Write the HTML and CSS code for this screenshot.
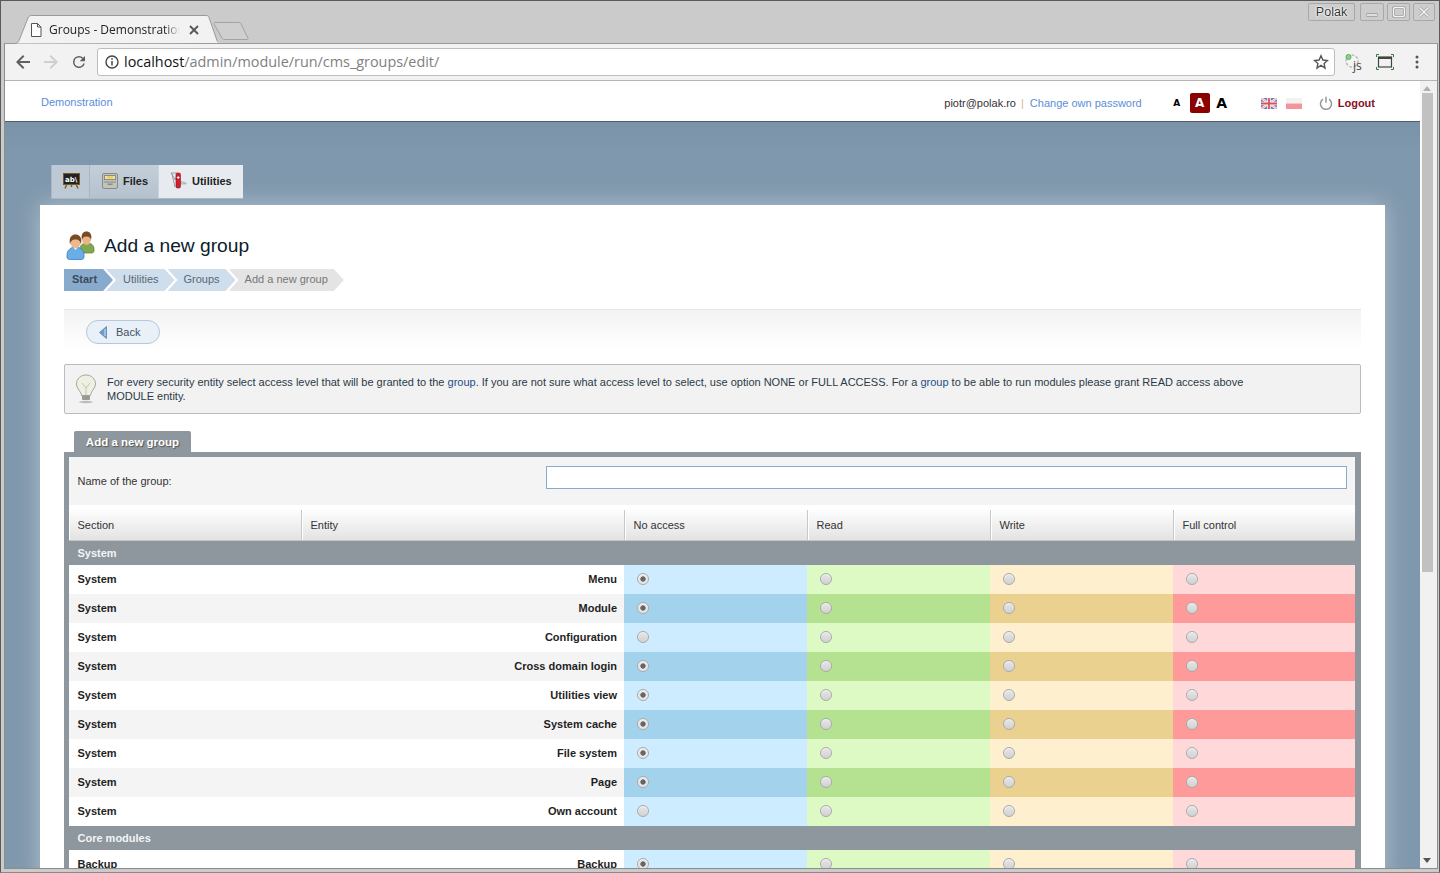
FILE: index.html
```html
<!DOCTYPE html>
<html lang="en">
<head>
<meta charset="utf-8">
<title>Groups - Demonstration</title>
<link rel="stylesheet" href="styles.css">
</head>
<body>
<div class="window">
  <div class="tabstrip">
    <div class="tab">
      <svg class="tab-shape" width="206" height="29" viewBox="0 0 206 29"><path d="M0 28.5h3c2 0 3-1 4-3L16 3c1-2 2-2.500 4-2.500h174c1.500 0 2.500.5 3 2l8 23c.6 1.800 1.500 2.500 3 2.500" fill="#f2f2f2" stroke="#9a9a9a"/></svg>
      <svg class="tab-doc" width="12" height="14" viewBox="0 0 12 14"><path d="M1.500.5h6l3.500 3.500v9.500h-9.500zM7.500.5v3.500h3.500" fill="#fff" stroke="#555"/></svg>
      <span class="tab-title">Groups - Demonstration</span>
      <svg class="tab-close" width="10" height="10" viewBox="0 0 10 10"><path d="M1 1l8 8M9 1l-8 8" stroke="#555" stroke-width="1.800"/></svg>
    </div>
    <svg class="newtab" width="36" height="18" viewBox="0 0 36 18"><path d="M2 .5h24c1 0 1.500.3 2 1.500l7 14c.3 1 0 1.500-1 1.500H11c-1 0-1.500-.5-2-1.500L1 2C.7 1 1 .5 2 .5z" fill="#cfcfcf" stroke="#a2a2a2"/></svg>
    <div class="spacer"></div>
    <div class="winbtn winbtn-user">Polak</div>
    <div class="winbtn winbtn-min"><svg width="14" height="12" viewBox="0 0 14 12"><path d="M1.500 9h11" stroke="#9a9a9a" stroke-width="3.500"/><path d="M2 9h10" stroke="#f4f4f4" stroke-width="1.500"/></svg></div>
    <div class="winbtn winbtn-max"><svg width="14" height="12" viewBox="0 0 14 12"><rect x="1.500" y="1.500" width="11" height="9" rx="1.500" fill="none" stroke="#9a9a9a" stroke-width="3"/><rect x="1.500" y="1.500" width="11" height="9" rx="1.500" fill="none" stroke="#f4f4f4" stroke-width="1.400"/></svg></div>
    <div class="winbtn winbtn-close"><svg width="14" height="12" viewBox="0 0 14 12"><path d="M2.500 1.500l9 9M11.500 1.500l-9 9" stroke="#9a9a9a" stroke-width="3"/><path d="M2.500 1.500l9 9M11.500 1.500l-9 9" stroke="#f4f4f4" stroke-width="1.600"/></svg></div>
  </div>
  <div class="frame">
    <div class="toolbar">
      <svg class="nav-ico" width="16" height="16" viewBox="0 0 16 16"><path d="M15 7H4.800l4.600-4.600L8 1 1 8l7 7 1.400-1.400L4.800 9H15z" fill="#5f5f5f"/></svg>
      <svg class="nav-ico" width="16" height="16" viewBox="0 0 16 16"><path d="M1 7h10.200L6.600 2.400 8 1l7 7-7 7-1.400-1.400L11.200 9H1z" fill="#cfcfcf"/></svg>
      <svg class="nav-ico" width="18" height="18" viewBox="0 0 24 24"><path d="M17.650 6.350A7.960 7.960 0 0 0 12 4a8 8 0 1 0 7.750 10h-2.080A6 6 0 1 1 12 6c1.660 0 3.140.69 4.220 1.780L13 11h7V4z" fill="#5f5f5f"/></svg>
      <div class="omnibox">
        <svg width="14" height="14" viewBox="0 0 14 14"><circle cx="7" cy="7" r="6" fill="none" stroke="#444" stroke-width="1.400"/><path d="M7 6v4.500M7 3.300v1.500" stroke="#444" stroke-width="1.500"/></svg>
        <span class="url"><span class="url-host">localhost</span>/admin/module/run/cms_groups/edit/</span>
        <svg class="star" width="16" height="16" viewBox="0 0 16 16"><path d="M8 1.800l1.900 4.200 4.600.5-3.400 3.100.9 4.500L8 11.300l-4 2.800.9-4.500L1.500 6.500l4.600-.5z" fill="none" stroke="#555" stroke-width="1.400"/></svg>
      </div>
      <div class="ext ext-js">
        <svg width="18" height="18" viewBox="0 0 18 18"><circle cx="8" cy="8" r="6" fill="#f4f4f4" stroke="#bbb" stroke-width="1.500" stroke-dasharray="3 1.500"/><circle cx="4.500" cy="4" r="2.500" fill="#8fd08f" stroke="#5cae5c"/></svg>
        <span class="js-label">js</span>
      </div>
      <div class="ext">
        <svg width="18" height="16" viewBox="0 0 18 16"><rect x="2.500" y="3" width="13" height="10" fill="none" stroke="#444" stroke-width="1.200"/><path d="M2.500 3h13v2h-13z" fill="#444"/><path d="M.5 3V.5H3M15 .5h2.500V3M17.500 13v2.500H15M3 15.500H.5V13" fill="none" stroke="#2e7d32" stroke-width="1"/></svg>
      </div>
      <div class="ext">
        <svg width="4" height="14" viewBox="0 0 4 14"><circle cx="2" cy="2" r="1.500" fill="#555"/><circle cx="2" cy="7" r="1.500" fill="#555"/><circle cx="2" cy="12" r="1.500" fill="#555"/></svg>
      </div>
    </div>
    <div class="viewport">
      <div class="page">
        <header class="site-head">
          <a class="site-name" href="#">Demonstration</a>
          <div class="site-tools">
            <span class="user">piotr@polak.ro</span>
            <span class="sep">|</span>
            <a class="pass" href="#">Change own password</a>
            <div class="fonts">
              <span class="f f-s">A</span>
              <span class="f f-m">A</span>
              <span class="f f-l">A</span>
            </div>
            <div class="flags">
              <svg width="16" height="11" viewBox="0 0 16 11"><rect width="16" height="11" fill="#6a7fb5"/><path d="M0 0l16 11M16 0L0 11" stroke="#fff" stroke-width="2.200"/><path d="M0 0l16 11M16 0L0 11" stroke="#e88" stroke-width=".8"/><path d="M8 0v11M0 5.500h16" stroke="#fff" stroke-width="3.500"/><path d="M8 0v11M0 5.500h16" stroke="#d9505a" stroke-width="1.800"/></svg>
              <svg width="16" height="11" viewBox="0 0 16 11"><rect width="16" height="5.500" fill="#f2f2f2"/><rect y="5.500" width="16" height="5.500" fill="#f3959c"/></svg>
            </div>
            <svg class="power" width="14" height="14" viewBox="0 0 14 14"><path d="M4 3.200A5.500 5.500 0 1 0 10 3.200M7 .8v6" fill="none" stroke="#999" stroke-width="1.500"/></svg>
            <a class="logout" href="#">Logout</a>
          </div>
        </header>
        <div class="stage">
          <nav class="menu">
            <a class="menu-item m-board" href="#">
              <svg width="17" height="16" viewBox="0 0 17 16"><path d="M4 11l-2 4.500M13 11l2 4.500M8.500 11v3" stroke="#7a5a20" stroke-width="1.400"/><rect x=".5" y=".5" width="16" height="11" fill="#222" stroke="#7a5a20"/><text class="board-text" x="2" y="8.500">ab\</text></svg>
            </a>
            <a class="menu-item m-files" href="#">
              <svg width="16" height="16" viewBox="0 0 16 16"><rect x=".5" y=".5" width="15" height="15" rx="1.500" fill="#c2c2bd" stroke="#8b8b86"/><rect x="2.500" y="2.500" width="11" height="4" fill="#ebe3b5" stroke="#8b8b86"/><rect x="5" y="3.500" width="6" height="1.600" fill="#f0c930"/><path d="M2 9h12" stroke="#8b8b86"/><rect x="5.500" y="10.500" width="5" height="1.500" fill="#8b8b86"/></svg>
              Files
            </a>
            <a class="menu-item m-util" href="#">
              <svg width="17" height="17" viewBox="0 0 17 17"><path d="M1 1h6L5.500 8zM2 2l3 13" fill="none" stroke="#9a9a9a"/><path d="M9 9l7 2v1H9z" fill="#cfcfcf" stroke="#999" stroke-width=".6"/><rect x="6" y="1" width="4.500" height="15" rx="1.500" fill="#cf1f2c" stroke="#8d1019" stroke-width=".6"/><path d="M8.200 4v3M6.800 5.500h2.800" stroke="#fff" stroke-width=".9"/></svg>
              Utilities
            </a>
          </nav>
          <main class="panel">
            <div class="title-row">
              <svg width="29" height="29" viewBox="0 0 29 29">
                <path d="M14 18c0-4 3-6 7-6s7 2 7 6v2c0 1-1 2-2 2H16c-1 0-2-1-2-2z" fill="#7fa84f" stroke="#5c7f35" stroke-width=".7"/>
                <ellipse cx="20.500" cy="8" rx="4.500" ry="6" fill="#e9b48c"/>
                <path d="M16 9C14.500 3 17.500.5 20.500.5S26.500 3 25 9c-.5-2-1.500-3.500-4.500-3.500S16.500 7 16 9z" fill="#7a4a22"/>
                <path d="M1 24c0-5 4-8 8.500-8s8.500 3 8.500 8v2c0 1.500-1 2.500-2.500 2.500h-12C2 28.500 1 27.500 1 26z" fill="#6aaee8" stroke="#3a7fc0" stroke-width=".8"/>
                <path d="M7 16l2.500 3L12 16z" fill="#fff"/>
                <ellipse cx="9.500" cy="11.500" rx="5" ry="6" fill="#ecb88f"/>
                <path d="M4 13.500C2.500 6 6 3.500 9.500 3.500S16.500 6 15 13.500c-.5-3-2-5-5.500-5S4.500 10.500 4 13.500z" fill="#7a4a22"/>
              </svg>
              <h1 class="title">Add a new group</h1>
            </div>
            <ol class="crumbs">
              <li class="crumb crumb-first">Start</li>
              <li class="crumb crumb-u">Utilities</li>
              <li class="crumb crumb-g">Groups</li>
              <li class="crumb crumb-last">Add a new group</li>
            </ol>
            <div class="actions">
              <a class="back" href="#">
                <svg width="8" height="13" viewBox="0 0 8 13"><path d="M7.500 .5v12L.5 6.500z" fill="#6d9cc9" stroke="#4f7ea9" stroke-width=".7"/><path d="M6 3v7" stroke="#cfe0f0" stroke-width="1"/></svg>
                Back
              </a>
            </div>
            <div class="info">
              <svg width="22" height="30" viewBox="0 0 22 30">
                <path d="M11 1C5.500 1 1.500 5 1.500 10c0 4 3 6 4.500 9.500l.5 2h9l.5-2C17 16 20.500 14 20.500 10 20.500 5 16.500 1 11 1z" fill="#eef0e4" stroke="#a5a79c"/>
                <path d="M7 9l4 5 4-5M11 14v7" fill="none" stroke="#c3c6ae"/>
                <rect x="7" y="21.500" width="8" height="4.500" rx="1" fill="#9a9a92"/>
                <ellipse cx="11" cy="28" rx="7" ry="1.200" fill="#bbb"/>
              </svg>
              <p class="info-text">For every security entity select access level that will be granted to the <a href="#">group</a>. If you are not sure what access level to select, use option NONE or FULL ACCESS. For a <a href="#">group</a> to be able to run modules please grant READ access above MODULE entity.</p>
            </div>
            <div class="form-tab">Add a new group</div>
            <div class="form-box">
              <div class="name-row">
                <label class="name-label" for="gname">Name of the group:</label>
                <input class="name-input" id="gname" type="text">
              </div>
              <table class="perm">
                <colgroup><col class="c-sec"><col class="c-ent"><col class="c-lvl"><col class="c-lvl"><col class="c-lvl"><col class="c-last"></colgroup>
                <thead>
                  <tr><th>Section</th><th>Entity</th><th>No access</th><th>Read</th><th>Write</th><th>Full control</th></tr>
                </thead>
                <tbody>
                  <tr class="group"><td colspan="6">System</td></tr>
                  <tr><td class="sec">System</td><td class="ent">Menu</td><td class="na"><input class="radio" type="radio" name="r1" checked></td><td class="re"><input class="radio" type="radio" name="r1"></td><td class="wr"><input class="radio" type="radio" name="r1"></td><td class="fu"><input class="radio" type="radio" name="r1"></td></tr>
                  <tr class="alt"><td class="sec">System</td><td class="ent">Module</td><td class="na"><input class="radio" type="radio" name="r2" checked></td><td class="re"><input class="radio" type="radio" name="r2"></td><td class="wr"><input class="radio" type="radio" name="r2"></td><td class="fu"><input class="radio" type="radio" name="r2"></td></tr>
                  <tr><td class="sec">System</td><td class="ent">Configuration</td><td class="na"><input class="radio" type="radio" name="r3"></td><td class="re"><input class="radio" type="radio" name="r3"></td><td class="wr"><input class="radio" type="radio" name="r3"></td><td class="fu"><input class="radio" type="radio" name="r3"></td></tr>
                  <tr class="alt"><td class="sec">System</td><td class="ent">Cross domain login</td><td class="na"><input class="radio" type="radio" name="r4" checked></td><td class="re"><input class="radio" type="radio" name="r4"></td><td class="wr"><input class="radio" type="radio" name="r4"></td><td class="fu"><input class="radio" type="radio" name="r4"></td></tr>
                  <tr><td class="sec">System</td><td class="ent">Utilities view</td><td class="na"><input class="radio" type="radio" name="r5" checked></td><td class="re"><input class="radio" type="radio" name="r5"></td><td class="wr"><input class="radio" type="radio" name="r5"></td><td class="fu"><input class="radio" type="radio" name="r5"></td></tr>
                  <tr class="alt"><td class="sec">System</td><td class="ent">System cache</td><td class="na"><input class="radio" type="radio" name="r6" checked></td><td class="re"><input class="radio" type="radio" name="r6"></td><td class="wr"><input class="radio" type="radio" name="r6"></td><td class="fu"><input class="radio" type="radio" name="r6"></td></tr>
                  <tr><td class="sec">System</td><td class="ent">File system</td><td class="na"><input class="radio" type="radio" name="r7" checked></td><td class="re"><input class="radio" type="radio" name="r7"></td><td class="wr"><input class="radio" type="radio" name="r7"></td><td class="fu"><input class="radio" type="radio" name="r7"></td></tr>
                  <tr class="alt"><td class="sec">System</td><td class="ent">Page</td><td class="na"><input class="radio" type="radio" name="r8" checked></td><td class="re"><input class="radio" type="radio" name="r8"></td><td class="wr"><input class="radio" type="radio" name="r8"></td><td class="fu"><input class="radio" type="radio" name="r8"></td></tr>
                  <tr><td class="sec">System</td><td class="ent">Own account</td><td class="na"><input class="radio" type="radio" name="r9"></td><td class="re"><input class="radio" type="radio" name="r9"></td><td class="wr"><input class="radio" type="radio" name="r9"></td><td class="fu"><input class="radio" type="radio" name="r9"></td></tr>
                  <tr class="group"><td colspan="6">Core modules</td></tr>
                  <tr><td class="sec">Backup</td><td class="ent">Backup</td><td class="na"><input class="radio" type="radio" name="r10" checked></td><td class="re"><input class="radio" type="radio" name="r10"></td><td class="wr"><input class="radio" type="radio" name="r10"></td><td class="fu"><input class="radio" type="radio" name="r10"></td></tr>
                </tbody>
              </table>
            </div>
          </main>
        </div>
      </div>
      <div class="scrollbar">
        <span class="arrow arrow-up"></span>
        <span class="thumb"></span>
        <span class="arrow arrow-down"></span>
      </div>
    </div>
  </div>
</div>
</body>
</html>
```
FILE: styles.css
```css
* { box-sizing: border-box; }
html, body { margin: 0; height: 100%; overflow: hidden; }
body { font-family: "Liberation Sans", Arial, sans-serif; font-size: 11px; color: #2b3a47; background: #cbcbcb; }
a { color: inherit; text-decoration: none; }

.window { width: 1440px; height: 873px; display: flex; flex-direction: column; background: #cbcbcb; border: 1px solid #5a5a5a; border-bottom-color: #8a8a8a; padding: 0 1px 3px 3px; overflow: hidden; }

.tabstrip { height: 42px; flex: none; display: flex; align-items: flex-start; padding-left: 8px; }
.tab { position: relative; width: 206px; height: 29px; margin-top: 14px; display: flex; align-items: center; padding: 0 0 0 18px; flex: none; }
.tab-shape { position: absolute; left: 0; top: 0; }
.tab-doc, .tab-title, .tab-close { position: relative; }
.tab-title { font-family: "Open Sans", "Noto Sans", sans-serif; font-size: 12px; color: #222; width: 131px; margin-left: 7px; white-space: nowrap; overflow: hidden; -webkit-mask-image: linear-gradient(to right, #000 88%, transparent); mask-image: linear-gradient(to right, #000 88%, transparent); }
.tab-close { margin-left: 9px; }
.newtab { margin: 21px 0 0 -5px; flex: none; }
.spacer { flex: 1; }
.winbtn { height: 18px; margin: 2px 3px 0 0; border: 1px solid #a8a8a8; border-radius: 2px; background: #cdcdcd; display: flex; align-items: center; justify-content: center; flex: none; }
.winbtn-user { width: 47px; margin-right: 5px; font-size: 12.500px; color: #333; text-shadow: 0 0 1px #fff, 0 0 1px #fff, 0 0 2px #fff, 0 0 2px #fff; }
.winbtn-min { width: 24px; }
.winbtn-max { width: 23px; }
.winbtn-close { width: 22px; }

.frame { flex: 1; min-height: 0; display: flex; flex-direction: column; border-left: 1px solid #8d8d8d; border-top: 1px solid #9a9a9a; border-right: 1px solid #8d8d8d; border-bottom: 1px solid #8d8d8d; }
.toolbar { height: 37px; flex: none; background: #f2f2f2; border-bottom: 1px solid #b4b4b4; display: flex; align-items: center; padding-left: 10px; }
.nav-ico { flex: none; margin-right: 12px; }
.nav-ico:nth-child(2) { margin-right: 11px; }
.nav-ico:nth-child(3) { margin-right: 9px; }
.omnibox { width: 1238px; height: 28px; flex: none; margin-right: 2px; background: #fff; border: 1px solid #bdbdbd; border-radius: 3px; display: flex; align-items: center; padding: 0 5px 0 7px; }
.url { font-family: "Open Sans", "Noto Sans", sans-serif; font-size: 14.400px; line-height: 18px; color: #808080; margin: 0 0 1px 5px; white-space: nowrap; flex: 1; }
.url-host { color: #111; }
.ext { width: 32px; height: 28px; display: flex; align-items: center; justify-content: center; flex: none; position: relative; }
.js-label { position: absolute; left: 16px; top: 9px; font-family: "Open Sans", sans-serif; font-size: 12px; color: #444; }

.viewport { flex: 1; min-height: 0; display: flex; overflow: hidden; }
.page { flex: 1; min-width: 0; overflow: hidden; display: flex; flex-direction: column; background: #fff; }

.site-head { height: 41px; flex: none; background: #fff; border-bottom: 1px solid #4d5f6e; display: flex; align-items: flex-start; justify-content: space-between; padding: 0 45px 0 36px; }
.site-name { color: #5b8ed8; margin-top: 15px; }
.site-tools { display: flex; align-items: center; height: 20px; margin-top: 12px; }
.user { color: #333; }
.sep { color: #d8b48a; margin: 0 6px 0 5px; }
.pass { color: #5b8ed8; }
.fonts { display: flex; align-items: center; margin-left: 26px; }
.f { font-family: "DejaVu Sans", sans-serif; font-weight: 700; color: #000; display: flex; align-items: center; justify-content: center; }
.f-s { font-size: 9px; width: 18px; margin-right: 4px; }
.f-m { font-size: 12px; width: 20px; height: 20px; background: #8b0000; color: #fff; border-radius: 2px; }
.f-l { font-size: 14px; width: 23px; padding-left: 1px; }
.flags { display: flex; gap: 9px; margin-left: 28px; }
.power { margin-left: 17px; }
.logout { font-weight: 700; color: #8b0f1f; margin-left: 5px; }

.stage { flex: 1; min-height: 0; background: linear-gradient(#7a93a8, #8098ad 30px); padding-top: 43px; overflow: hidden; }
.menu { display: flex; height: 34px; margin-left: 46px; }
.menu-item { display: flex; align-items: center; gap: 4px; font-weight: 700; color: #222; border-bottom: 1px solid #a9b8c5; padding-bottom: 2px; }
.m-board { width: 39px; justify-content: center; padding-left: 1px; background: #bdc9d4; border-left: 1px solid #aab7c3; border-right: 1px solid #a9b7c3; }
.m-files { width: 69px; padding-left: 12px; background: linear-gradient(#c3ced8, #b5c2ce); border-right: 1px solid #c9d3db; gap: 5px; }
.m-util { width: 84px; padding-left: 11px; background: #e7ebef; gap: 5px; }
.board-text { font-family: "DejaVu Sans", sans-serif; font-size: 7px; font-weight: 700; fill: #fff; }

.panel { margin: 6px 35px 0; background: #fff; padding: 25px 24px 0; box-shadow: 0 0 22px rgba(255, 255, 255, .38); }
.title-row { display: flex; align-items: center; height: 30px; padding-left: 2px; gap: 9px; }
.title { margin: 0; font-size: 19.200px; font-weight: 400; color: #0c1b2a; line-height: 31px; }

.crumbs { list-style: none; margin: 9px 0 0; padding: 0; display: flex; height: 22px; }
.crumb { height: 22px; line-height: 21px; margin-left: -7px; padding: 0 16px 0 16px; background: #cfdeec; color: #5b6670; clip-path: polygon(0 0, calc(100% - 10px) 0, 100% 50%, calc(100% - 10px) 100%, 0 100%, 10px 50%); }
.crumb-first { margin-left: 0; padding: 0 16px 0 8px; background: #88aacd; color: #3a4a5a; font-weight: 700; clip-path: polygon(0 0, calc(100% - 10px) 0, 100% 50%, calc(100% - 10px) 100%, 0 100%); }
.crumb-u { padding-left: 17px; }
.crumb-last { background: #e4e4e4; color: #777; }

.actions { margin-top: 18px; height: 41px; border-top: 1px solid #e6e6e6; background: linear-gradient(#f3f3f3, #fff); padding: 10px 0 0 22px; }
.back { display: inline-flex; align-items: center; gap: 9px; width: 74px; height: 24px; padding-left: 12px; border: 1px solid #b3c8dc; border-radius: 12px; background: #e9f0f7; color: #3f5266; }

.info { margin-top: 14px; height: 50px; border: 1px solid #bcbcbc; border-radius: 2px; background: #f2f2f2; display: flex; align-items: center; padding: 0 20px 0 10px; gap: 10px; }
.info svg { flex: none; }
.info-text { margin: 0; line-height: 14px; color: #2b3a47; width: 1145px; }
.info-text a { color: #1d4f87; }

.form-tab { margin: 17px 0 0 10px; width: 117px; height: 21px; line-height: 22px; background: #8e979e; border-radius: 2px 2px 0 0; color: #fff; font-weight: 700; font-size: 11.500px; text-align: center; text-shadow: 1px 1px 1px #555; }
.form-box { border: 5px solid #8e979e; border-right-width: 6px; background: #fff; }
.name-row { height: 48px; background: #f4f4f4; display: flex; align-items: center; justify-content: space-between; padding: 0 8px 0 8.500px; }
.name-label { color: #333; margin-bottom: 1px; }
.name-input { width: 801px; height: 23px; margin: 0 0 7px; padding: 0 4px; border: 1px solid #86abd2; background: #fff; font: inherit; outline: none; }

.perm { width: 100%; margin-top: 5px; border-collapse: separate; border-spacing: 0; table-layout: fixed; }
.c-sec { width: 232px; }
.c-ent { width: 323px; }
.c-lvl { width: 183px; }
.c-last { width: 182px; }
.perm th { height: 31px; padding: 0 0 0 8.500px; text-align: left; font-weight: 400; color: #333; background: linear-gradient(#fdfdfd, #e3e3e3); border-bottom: 1px solid #c4c4c4; box-shadow: inset 1px 0 0 #fff; }
.perm th + th { border-left: 1px solid #c8c8c8; }
.perm td { padding: 0; height: 29px; }
.perm .group td { height: 24px; background: #8e979e; color: #f2f4f6; font-weight: 700; padding-left: 8.500px; }
.sec, .ent { font-weight: 700; color: #1f1f1f; background: #fff; }
.perm .sec { padding: 0 0 2px 8.500px; }
.perm .ent { text-align: right; padding: 0 7px 2px 0; }
.alt .sec, .alt .ent { background: #f4f4f4; }
.perm .na, .perm .re, .perm .wr, .perm .fu { padding: 0 0 1px 13px; }
.na { background: #cdecff; }
.re { background: #ddfac4; }
.wr { background: #fef0cf; }
.fu { background: #ffd9d9; }
.alt .na { background: #a3d2ec; }
.alt .re { background: #b4e290; }
.alt .wr { background: #ebd190; }
.alt .fu { background: #ff9a9a; }
.radio { appearance: none; -webkit-appearance: none; display: block; width: 12px; height: 12px; margin: 0; border: 1px solid #a9a9a9; border-radius: 50%; background: linear-gradient(#e6e6e6, #d2d2d2); box-shadow: inset 0 1px 1px #f6f6f6; }
.radio:checked { background: radial-gradient(circle, #666 0 2.300px, #e6e6e6 3px); }

.scrollbar { width: 17px; flex: none; background: #f1f1f1; position: relative; display: flex; flex-direction: column; align-items: flex-start; }
.thumb { width: 13px; height: 479px; margin-top: 2px; background: #c1c1c1; border-left: 2px solid #fafafa; }
.arrow { width: 0; height: 0; border-left: 4px solid transparent; border-right: 4px solid transparent; margin-left: 3px; }
.arrow-up { margin-top: 5px; border-bottom: 5px solid #b0b0b0; }
.arrow-down { position: absolute; bottom: 5px; border-top: 5px solid #555; }
```
